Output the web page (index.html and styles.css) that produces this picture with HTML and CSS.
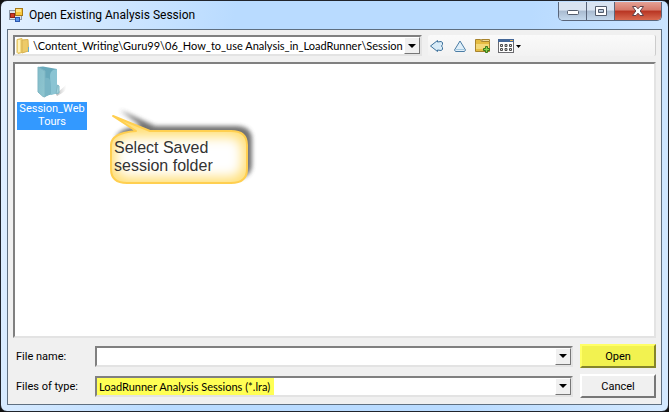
FILE: index.html
```html
<!DOCTYPE html>
<html lang="en">
<head>
<meta charset="utf-8">
<title>Open Existing Analysis Session</title>
<link rel="stylesheet" href="styles.css">
</head>
<body>
<main class="window">
  <header class="titlebar">
    <svg class="app-icon" width="14" height="14" viewBox="0 0 14 14" aria-hidden="true">
      <rect x=".5" y="2.500" width="12" height="9" fill="#dde3ea" stroke="#8c98a8"/>
      <rect x="6.500" y=".5" width="7" height="7" fill="#f8c83c" stroke="#a87a18"/>
      <rect x="7" y="1" width="5" height="3" fill="#ffe384"/>
      <rect x="1.500" y="5.500" width="4" height="4" fill="#d43a24" stroke="#8f2418"/>
      <rect x="6.500" y="9.500" width="4" height="4" fill="#5c94e8" stroke="#2c58b0"/>
    </svg>
    <h1 class="title">Open Existing Analysis Session</h1>
    <div class="caption-buttons">
      <button class="caption" aria-label="Minimize"><svg width="14" height="12" viewBox="0 0 14 12"><rect x="1.500" y="5.500" width="11" height="4" rx="1" fill="#fff" stroke="#535c6c"/></svg></button>
      <button class="caption" aria-label="Maximize"><svg width="14" height="12" viewBox="0 0 14 12"><path d="M1.500 1.500h11v9h-11zM4.500 4.500v3h5v-3z" fill="#fff" fill-rule="evenodd" stroke="#535c6c"/></svg></button>
      <button class="caption caption-close" aria-label="Close"><svg width="14" height="12" viewBox="0 0 14 12"><path d="M1.500 1.500h3.500l2 2.300 2-2.300h3.500L9.200 6l3.300 4.500H9L7 8.200l-2 2.300H1.500L4.800 6z" fill="#fff" stroke="#5f4048"/></svg></button>
    </div>
  </header>
  <form class="client">
    <div class="location">
      <div class="combo path">
        <svg class="path-icon" width="14" height="16" viewBox="0 0 14 16" aria-hidden="true">
          <path d="M1 1.500L6 .5v14l-4 1-1-1z" fill="#f5dc85" stroke="#dfbd58"/>
          <path d="M6 2l6-.5.5 11.500L6 15z" fill="#edcb68" stroke="#d8b250"/>
          <path d="M3 2v12" stroke="#fff2bb" stroke-width="2"/>
          <path d="M12 9h1v5h-1z" fill="#67add0"/>
        </svg>
        <select class="field" aria-label="Look in"><option>\Content_Writing\Guru99\06_How_to_use Analysis_in_LoadRunner\Session</option></select>
        <span class="arrow"></span>
      </div>
      <div class="toolbar">
        <button type="button" class="tool" aria-label="Back"><svg width="16" height="16" viewBox="0 0 16 16"><path d="M1.500 8L8.500 2.500V4l3.500-.5 1.500 1v2L12.500 8l1 1.500v2l-1.500 1L8.500 12v1.500z" fill="#d8ebf7" stroke="#3d719b" stroke-linejoin="round"/></svg></button>
        <button type="button" class="tool" aria-label="Up one level"><svg width="16" height="16" viewBox="0 0 16 16"><path d="M8 3l5.500 9-1 1.500h-9l-1-1.500z" fill="#e0eff9" stroke="#4b7da5" stroke-linejoin="round"/><path d="M4 11.500h8" stroke="#a4c8df"/></svg></button>
        <button type="button" class="tool" aria-label="New folder"><svg width="16" height="16" viewBox="0 0 16 16"><path d="M.5 13.500v-12h5l1 2h8v10z" fill="#e5bc42" stroke="#a8842e"/><path d="M6.500 1.500h8v2h-7z" fill="#ead99a" stroke="#a8842e"/><path d="M1 6h13v5H1z" fill="#f3d878"/><path d="M10.500 8.500h2v2h2v2h-2v2h-2v-2h-2v-2h2z" fill="#8bd34b" stroke="#38771d"/></svg></button>
        <button type="button" class="tool" aria-label="View menu"><svg width="24" height="16" viewBox="0 0 24 16"><rect x=".5" y="1.500" width="15" height="13" fill="#fff" stroke="#6c6c70"/><path d="M0 1h16v3H0z" fill="#456898"/><path d="M12 2h3v1h-3z" fill="#e7b24c"/><path d="M2.500 6.500h2v2h-2zM7 6.500h2v2H7zM11.500 6.500h2v2h-2zM2.500 10.500h2v2h-2zM7 10.500h2v2H7zM11.500 10.500h2v2h-2z" fill="#ddd" stroke="#4c4c4c"/><path d="M18 7h5l-2.500 3z" fill="#000"/></svg></button>
      </div>
    </div>
    <section class="files" aria-label="Files">
      <a class="file" href="#">
        <svg width="32" height="34" viewBox="0 0 32 34" aria-hidden="true">
          <defs>
            <linearGradient id="front" x2="1" y2="1"><stop stop-color="#83bcc9"/><stop offset="1" stop-color="#8fc6d0"/></linearGradient>
            <linearGradient id="shade"><stop stop-color="#777" stop-opacity=".55"/><stop offset="1" stop-color="#999" stop-opacity="0"/></linearGradient>
          </defs>
          <path d="M20 29l10-9q2 6-9 11z" fill="url(#shade)"/>
          <path d="M2 2l5-.5 14 2.500v24l-12 3z" fill="#69a9bb"/>
          <path d="M2 2l7 4v26l-2-.5-5-4.500z" fill="url(#front)" stroke="#7fb5c3"/>
          <path d="M21 4v18l2-1v7l-8 2-1-19q0-4 3-6z" fill="#8bc4d3"/>
          <path d="M9 13q4-1 5 2l1 14-6 3z" fill="#79b5c5"/>
          <path d="M21.500 20l1.500 1v7l-3 .5z" fill="#a4d3dc" stroke="#7fb5c3"/>
        </svg>
        <span class="file-name">Session_Web Tours</span>
      </a>
      <div class="callout">
        <svg class="bubble" width="156" height="84" viewBox="0 0 156 84" aria-hidden="true">
          <defs>
            <filter id="blur" x="-20%" y="-20%" width="140%" height="140%"><feGaussianBlur stdDeviation="2"/></filter>
            <filter id="soft" x="-20%" y="-30%" width="140%" height="160%"><feGaussianBlur stdDeviation="6"/></filter>
            <clipPath id="inside"><path d="M5 10L42 25H123Q139 25 139 39V63Q139 77 123 77H19Q3 77 3 63V39Q3 27 28 25Z"/></clipPath>
          </defs>
          <path d="M12 4L47 20H128Q144 20 144 34V58Q144 72 128 72H24Q8 72 8 58V34Q8 22 33 20Z" fill="#444" opacity=".75" filter="url(#blur)"/>
          <path d="M5 10L42 25H123Q139 25 139 39V63Q139 77 123 77H19Q3 77 3 63V39Q3 27 28 25Z" fill="#ffdf78"/>
          <g clip-path="url(#inside)"><rect x="8" y="31" width="126" height="40" rx="12" fill="#fff" filter="url(#soft)"/></g>
          <path d="M5 10L42 25H123Q139 25 139 39V63Q139 77 123 77H19Q3 77 3 63V39Q3 27 28 25Z" fill="none" stroke="#ffcf50" stroke-width="2" stroke-linejoin="round"/>
        </svg>
        <p class="callout-text">Select Saved<br>session folder</p>
      </div>
    </section>
    <div class="fields">
      <label for="name">File name:</label>
      <div class="combo"><input class="field" id="name" type="text"><span class="arrow"></span></div>
      <button type="button" class="push push-open">Open</button>
      <label for="type">Files of type:</label>
      <div class="combo"><select class="field field-marked" id="type"><option>LoadRunner Analysis Sessions (*.lra)</option></select><span class="arrow"></span></div>
      <button type="button" class="push">Cancel</button>
    </div>
  </form>
</main>
</body>
</html>
```
FILE: styles.css
```css
* { box-sizing: border-box; }

body {
  margin: 0;
  background: #111;
  font-family: Roboto, "Liberation Sans", sans-serif;
  font-size: 11px;
  color: #000;
}

button, input, select { font: inherit; color: inherit; }

.window {
  display: flex;
  flex-direction: column;
  min-height: 100vh;
  padding: 1px 6px 6px;
  border: 1px solid #20242c;
  border-radius: 7px;
  background: linear-gradient(100deg, #e4f1ff 0, #b9dbff 32%, #b9dbff 72%, #d4e9ff 100%);
}

.titlebar {
  display: flex;
  align-items: flex-start;
  height: 27px;
  padding-left: 2px;
}

.app-icon { margin-top: 6px; }

.title {
  flex: 1;
  margin: 0 0 0 6px;
  font: 12px/27px Roboto, sans-serif;
}

.caption-buttons {
  display: flex;
  border: 1px solid #59657a;
  border-top: 0;
  border-radius: 0 0 5px 5px;
  overflow: hidden;
}

.caption {
  display: grid;
  place-items: center;
  width: 28px;
  height: 18px;
  padding: 0;
  border: 0;
  border-right: 1px solid #59657a;
  background: linear-gradient(#d9e4f1 0 45%, #a9bbd0 50%, #c4d8ec);
}

.caption-close {
  width: 46px;
  border-right: 0;
  background: linear-gradient(#e5a195 0, #d6796a 45%, #b83422 50%, #d96a50);
}

.client {
  flex: 1;
  display: flex;
  flex-direction: column;
  gap: 6px;
  margin: 0;
  padding: 5px 5px 6px;
  border: 1px solid #5f6f80;
  background: #f0f0f0;
}

.location { display: flex; gap: 6px; }

.combo {
  display: flex;
  height: 21px;
  border: 2px solid;
  border-color: #808080 #e3e3e3 #e3e3e3 #808080;
  background: #fff;
}

.path {
  flex: 409;
  min-width: 0;
  font-family: Lato, sans-serif;
}

.path-icon { flex: none; margin: 1px 3px 0 1px; }

.field {
  flex: 1;
  min-width: 0;
  padding: 0 0 0 2px;
  border: 0;
  border-radius: 0;
  background: transparent;
  appearance: none;
  outline: 0;
}

.path .field { padding: 0; }

.field-marked {
  background: linear-gradient(#ff5, #ff5) no-repeat 0 0 / 177px 100%;
  font-family: Lato, sans-serif;
}

.arrow {
  flex: none;
  display: grid;
  place-items: center;
  width: 16px;
  border: 1px solid;
  border-color: #fff #777 #777 #fff;
  background: #f0f0f0;
}

.arrow::before {
  content: "";
  border: 4px solid transparent;
  border-top-color: #000;
  border-bottom: 0;
}

.toolbar {
  flex: 229;
  display: flex;
  align-items: center;
  gap: 7px;
  padding-left: 1px;
  border-right: 1px solid #ccc;
  border-radius: 2px;
  background: linear-gradient(#fafafa, #f2f2f2);
}

.tool {
  display: flex;
  padding: 0;
  border: 0;
  background: none;
}

.files {
  flex: 1;
  position: relative;
  padding: 1px 2px;
  border: 2px solid;
  border-color: #808080 #e3e3e3 #e3e3e3 #808080;
  background: #fff;
}

.file {
  display: flex;
  flex-direction: column;
  align-items: center;
  gap: 3px;
  width: 70px;
  color: #fff;
  text-align: center;
  text-decoration: none;
}

.file-name {
  width: 100%;
  height: 28px;
  background: #39f;
  line-height: 13px;
}

.callout {
  position: absolute;
  top: 42px;
  left: 93px;
}

.bubble { display: block; }

.callout-text {
  position: absolute;
  top: 33px;
  left: 6px;
  margin: 0;
  font: 16px/18px "Liberation Sans", sans-serif;
  color: #333;
  white-space: nowrap;
}

.fields {
  display: grid;
  grid-template-columns: 75px 1fr 76px;
  align-items: center;
  gap: 6px 7px;
}

.fields label { padding-left: 3px; }

.push {
  height: 24px;
  padding: 0;
  border: 2px solid;
  border-color: #fff #777 #777 #fff;
  background: #f0f0f0;
}

.push-open {
  border-color: #ff6 #85852a #85852a #ff6;
  background: #f2f250;
}
```
